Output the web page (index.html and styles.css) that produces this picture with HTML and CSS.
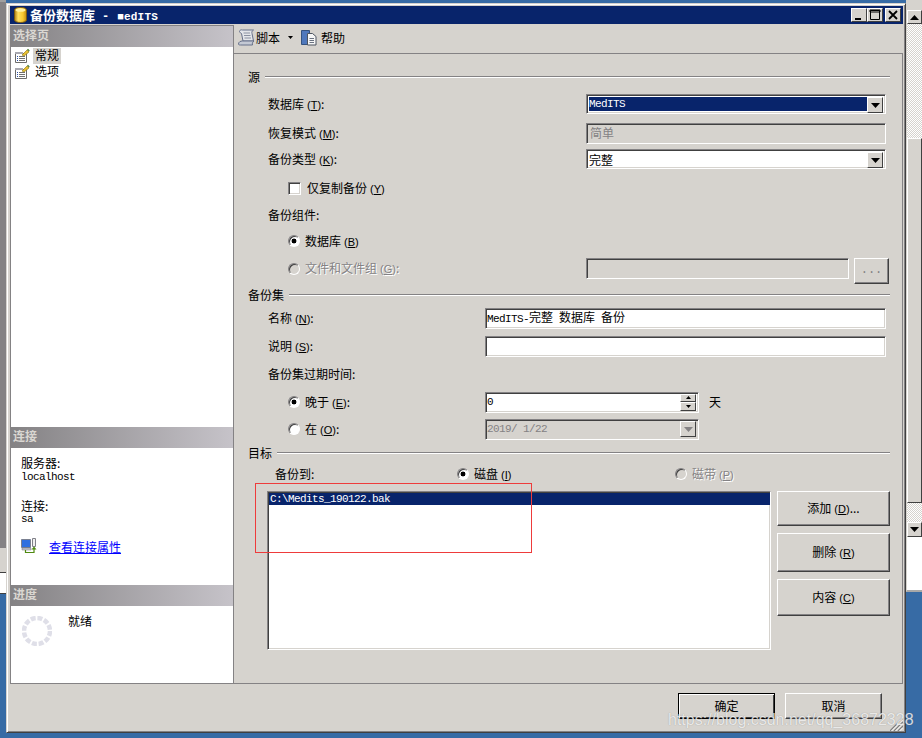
FILE: index.html
```html
<!DOCTYPE html>
<html lang="zh-CN">
<head>
<meta charset="utf-8">
<title>备份数据库 - MedITS</title>
<link rel="stylesheet" href="styles.css">
</head>
<body>
<svg class="defs" width="0" height="0" aria-hidden="true">
  <symbol id="page-icon" viewBox="0 0 16 16">
    <path d="M1.500 5.500h11v9h-11z" fill="#fff" stroke="#6b6b6b"/>
    <path d="M1 4h8v2H1z" fill="#a8a8b0"/>
    <path d="M3 8h1v1H3zM3 10h1v1H3zM3 12h1v1H3z" fill="#2a4fa8"/>
    <path d="M5 8h6v1H5zM5 10h6v1H5zM5 12h6v1H5z" fill="#707070"/>
    <path d="M8 7l5-5 2 2-5 4z" fill="#e8c030" stroke="#8a7010" stroke-width=".6"/>
    <path d="M13 1.500l2 2 .7-1-1.700-1.700z" fill="#4a7a30"/>
  </symbol>
  <symbol id="arrow-down" viewBox="0 0 9 5">
    <path d="M0 0h9L4.500 5z"/>
  </symbol>
</svg>

<div class="rear rear-left">
  <div class="rear-dark"></div>
  <div class="rear-bar"></div>
  <div class="rear-white"></div>
</div>

<div class="rear rear-right">
  <div class="scroll-btn scroll-up"><svg class="tri" viewBox="0 0 9 5"><path d="M0 5h9L4.500 0z"/></svg></div>
  <div class="scroll-track scroll-track-a"></div>
  <div class="scroll-thumb"></div>
  <div class="scroll-track scroll-track-b"></div>
  <div class="scroll-btn scroll-down"><svg class="tri"><use href="#arrow-down"/></svg></div>
  <div class="rear-white rear-white-r"></div>
</div>

<main class="window">
  <header class="titlebar">
    <svg class="db-icon" viewBox="0 0 13 16">
      <defs>
        <linearGradient id="db-fill" x1="0" x2="1" y1="0" y2="0">
          <stop offset="0" stop-color="#a87810"/>
          <stop offset=".3" stop-color="#ffe060"/>
          <stop offset=".7" stop-color="#f8c830"/>
          <stop offset="1" stop-color="#c08a10"/>
        </linearGradient>
      </defs>
      <path d="M.5 3c0-3.300 12-3.300 12 0v10c0 3.300-12 3.300-12 0z" fill="url(#db-fill)" stroke="#7a5a10"/>
      <ellipse cx="6.500" cy="3" rx="5" ry="1.800" fill="#fff0a0"/>
    </svg>
    <span class="title-text">备份数据库<span class="title-dash">-</span><span class="title-name">■edITS</span></span>
    <div class="caption-btns">
      <button class="cap-btn cap-min" type="button"><svg viewBox="0 0 14 12"><path d="M3 9h6v2H3z"/></svg></button>
      <button class="cap-btn cap-max" type="button"><svg viewBox="0 0 14 12"><path d="M2.500 1.500h9v9h-9z M2 1h10v2H2z" fill="none" stroke="#000"/></svg></button>
      <button class="cap-btn cap-close" type="button"><svg viewBox="0 0 14 12"><path d="M3 2l8 8M11 2l-8 8" stroke="#000" stroke-width="1.800"/></svg></button>
    </div>
  </header>

  <div class="content">
    <aside class="sidebar">
      <section class="side-section side-pages">
        <h2 class="side-head">选择页</h2>
        <ul class="tree">
          <li class="tree-item"><svg class="icon16"><use href="#page-icon"/></svg><span class="tree-label tree-current">常规</span></li>
          <li class="tree-item"><svg class="icon16"><use href="#page-icon"/></svg><span class="tree-label">选项</span></li>
        </ul>
      </section>
      <section class="side-section side-conn">
        <h2 class="side-head">连接</h2>
        <div class="conn-body">
          <div class="conn-label">服务器:</div>
          <div class="conn-value">localhost</div>
          <div class="conn-label conn-next">连接:</div>
          <div class="conn-value">sa</div>
          <div class="conn-link">
            <svg class="icon16" viewBox="0 0 16 16">
              <path d="M.5 1.500h9v8h-9z" fill="#2f6fe0" stroke="#7a8090"/>
              <path d="M1 10h9v2H1z" fill="#c8c8d0" stroke="#70707a" stroke-width=".5"/>
              <path d="M11.500 .5h3v8h-3z" fill="#f0f0f0" stroke="#808088"/>
              <path d="M4.500 12v2.500h8.500V11" fill="none" stroke="#4f8a10" stroke-width="1.200"/>
              <path d="M10.500 11.500L13 8.500l2.500 3z" fill="#4f8a10"/>
            </svg>
            <a class="link" href="#">查看连接属性</a>
          </div>
        </div>
      </section>
      <section class="side-section side-progress">
        <h2 class="side-head">进度</h2>
        <div class="progress-body">
          <svg class="spinner" viewBox="0 0 30 30">
            <circle cx="15" cy="15" r="13" fill="none" stroke="#dfdfe8" stroke-width="4.500" stroke-dasharray="5 1.810"/>
          </svg>
          <span class="progress-text">就绪</span>
        </div>
      </section>
    </aside>

    <div class="pane">
      <div class="toolbar">
        <svg class="icon-script" viewBox="0 0 17 17">
          <path d="M1.500 2.500c0-1.500 2-2 3-1.500h11c-1.500 1-2 2-1.500 3.500l1.500 7.500H5L3.500 4.500C3 3.500 1.500 4 1.500 2.500z" fill="#e4e6ea" stroke="#66708a"/>
          <path d="M.5 15c0-2 2-3 4-3h11.500c-1.500 1-2 2.500-1.500 4H2.500C1.500 16 .5 16 .5 15z" fill="#c4c9d4" stroke="#66708a"/>
          <path d="M5.500 4h6.500M6 6.500h6.500M6.500 9h6.500" stroke="#8a90a0"/>
        </svg>
        <span class="tool-label">脚本</span>
        <svg class="tool-arrow"><use href="#arrow-down"/></svg>
        <svg class="icon-help" viewBox="0 0 16 17">
          <path d="M.5 1.500h8v14h-8z" fill="#4f78bc" stroke="#34527f"/>
          <path d="M6.500 4.500h5l3.500 3v8.500H6.500z" fill="#f6f6f6" stroke="#4c5460"/>
          <path d="M8.500 9.500h4.500M8.500 11.500h4.500M8.500 13.500h4.500" stroke="#6a7280"/>
        </svg>
        <span class="tool-label">帮助</span>
      </div>

      <form class="form">
        <div class="row group-row">
          <span class="group-title">源</span><span class="group-line"></span>
        </div>

        <div class="row indent">
          <label class="label label-wide">数据库<span class="key">(<u>T</u>)</span>:</label>
          <div class="combo combo-selected">
            <span class="combo-value mono">MedITS</span>
            <span class="combo-btn"><svg class="tri"><use href="#arrow-down"/></svg></span>
          </div>
        </div>

        <div class="row indent">
          <label class="label label-wide">恢复模式<span class="key">(<u>M</u>)</span>:</label>
          <div class="input input-wide input-off"><span class="off-text">简单</span></div>
        </div>

        <div class="row indent">
          <label class="label label-wide">备份类型<span class="key">(<u>K</u>)</span>:</label>
          <div class="combo combo-plain">
            <span class="combo-value">完整</span>
            <span class="combo-btn"><svg class="tri"><use href="#arrow-down"/></svg></span>
          </div>
        </div>

        <div class="row indent-sub">
          <span class="checkbox"></span>
          <label class="label check-label">仅复制备份<span class="key">(<u>Y</u>)</span></label>
        </div>

        <div class="row indent">
          <label class="label">备份组件:</label>
        </div>

        <div class="row indent-sub">
          <span class="radio radio-on"></span>
          <label class="label radio-label">数据库<span class="key">(<u>B</u>)</span></label>
        </div>

        <div class="row indent-sub row-top">
          <span class="radio radio-off"></span>
          <label class="label radio-label label-off label-file">文件和文件组<span class="key">(<u>G</u>)</span>:</label>
          <div class="input input-file input-off"></div>
          <button class="btn btn-browse" type="button" disabled>...</button>
        </div>

        <div class="row group-row">
          <span class="group-title">备份集</span><span class="group-line"></span>
        </div>

        <div class="row indent">
          <label class="label label-mid">名称<span class="key">(<u>N</u>)</span>:</label>
          <div class="input input-long"><span class="mono">MedITS-<span class="cjk">完整</span> <span class="cjk">数据库</span> <span class="cjk">备份</span></span></div>
        </div>

        <div class="row indent">
          <label class="label label-mid">说明<span class="key">(<u>S</u>)</span>:</label>
          <div class="input input-long"></div>
        </div>

        <div class="row indent">
          <label class="label">备份集过期时间:</label>
        </div>

        <div class="row indent-sub">
          <span class="radio radio-on"></span>
          <label class="label radio-label label-date">晚于<span class="key">(<u>E</u>)</span>:</label>
          <div class="input input-date">
            <span class="mono">0</span>
            <span class="spin">
              <span class="spin-btn"><svg class="tri-sm" viewBox="0 0 5 3"><path d="M0 3h5L2.500 0z"/></svg></span>
              <span class="spin-btn"><svg class="tri-sm" viewBox="0 0 5 3"><path d="M0 0h5L2.500 3z"/></svg></span>
            </span>
          </div>
          <span class="unit">天</span>
        </div>

        <div class="row indent-sub">
          <span class="radio radio-plain"></span>
          <label class="label radio-label label-date">在<span class="key">(<u>O</u>)</span>:</label>
          <div class="input input-date input-off">
            <span class="mono off-mono">2019/ 1/22</span>
            <span class="combo-btn combo-btn-off"><svg class="tri tri-off"><use href="#arrow-down"/></svg></span>
          </div>
        </div>

        <div class="row group-row">
          <span class="group-title">目标</span><span class="group-line"></span>
        </div>

        <div class="row row-target">
          <label class="label label-to">备份到:</label>
          <span class="radio radio-on"></span>
          <label class="label radio-label label-disk">磁盘<span class="key">(<u>I</u>)</span></label>
          <span class="radio radio-off"></span>
          <label class="label radio-label label-off">磁带<span class="key">(<u>P</u>)</span></label>
        </div>

        <div class="dest">
          <div class="listbox">
            <div class="list-item mono">C:\Medits_190122.bak</div>
          </div>
          <div class="dest-btns">
            <button class="btn btn-add" type="button">添加<span class="key">(<u>D</u>)</span>...</button>
            <button class="btn btn-del" type="button">删除<span class="key">(<u>R</u>)</span></button>
            <button class="btn btn-props" type="button">内容<span class="key">(<u>C</u>)</span></button>
          </div>
        </div>
      </form>
    </div>
  </div>

  <footer class="footer">
    <button class="btn btn-dlg btn-default" type="button">确定</button>
    <button class="btn btn-dlg" type="button">取消</button>
    <svg class="grip" viewBox="0 0 13 13">
      <path d="M0 13L13 0M4 13L13 4M8 13l5-5" stroke="#808080" stroke-width="1.400"/>
      <path d="M1.500 13L13 1.500M5.500 13L13 5.500M9.500 13L13 9.500" stroke="#fff"/>
    </svg>
  </footer>
</main>

<!-- annotation drawn over the destination list -->
<div class="red-box"></div>
<div class="watermark">https://blog.csdn.net/qq_36872328</div>
</body>
</html>
```

FILE: styles.css
```css
* { box-sizing: border-box; }

html, body {
  margin: 0;
  height: 100%;
}

body {
  position: relative;
  width: 922px;
  height: 738px;
  overflow: hidden;
  background: #376ba5;
  font: 12px/15px "Noto Sans CJK SC", "Liberation Sans", sans-serif;
  color: #000;
}

.defs { position: absolute; }

/* windows behind the dialog */
.rear {
  position: absolute;
  top: 0;
  display: flex;
  flex-direction: column;
}

.rear-left {
  left: 0;
  width: 6px;
  height: 594px;
  border-bottom: 1px solid #404040;
}

.rear-dark { height: 548px; background: #848284; border-top: 2px solid #a0a0a0; }
.rear-bar { height: 25px; background: #d6d3ce; border-bottom: 1px solid #404040; }
.rear-white { flex: 1; background: #fff; }

.rear-right {
  left: 906px;
  width: 16px;
  height: 592px;
  padding-top: 10px;
  background: #d6d3ce;
  border-bottom: 2px solid #a8a8a8;
  border-left: 1px solid #d6d3ce;
}

.scroll-btn {
  display: flex;
  align-items: center;
  justify-content: center;
  height: 14px;
  background: #d6d3ce;
  border: 1px solid;
  border-color: #fff #404040 #404040 #fff;
}

.scroll-track {
  background: repeating-conic-gradient(#fff 0 25%, #d6d3ce 0 50%) 0 0 / 2px 2px;
}
.scroll-track-a { height: 114px; }
.scroll-track-b { height: 19px; }

.scroll-thumb {
  height: 365px;
  background: #d6d3ce;
  border: 1px solid;
  border-color: #fff #404040 #404040 #fff;
}

.scroll-down { height: 15px; }

.tri { width: 9px; height: 5px; display: block; fill: #000; }
.tri-off { fill: #848284; }
.tri-sm { width: 5px; height: 3px; display: block; }

/* dialog frame */
.window {
  position: absolute;
  left: 6px;
  top: 3px;
  width: 900px;
  height: 730px;
  padding: 2px 2px 0 3px;
  background: #d6d3ce;
  border: 1px solid;
  border-color: #d6d3ce #404040 #404040 #d6d3ce;
  box-shadow: inset 1px 1px 0 #fff, inset -1px -1px 0 #848284;
  display: flex;
  flex-direction: column;
}

.titlebar {
  height: 18px;
  flex: none;
  margin-bottom: 1px;
  background: #08246b;
  color: #fff;
  display: flex;
  align-items: center;
  padding: 0 2px 0 4px;
}

.db-icon { width: 13px; height: 16px; flex: none; }

.title-text {
  margin-left: 3px;
  font-size: 13px;
  font-weight: 700;
  white-space: pre;
}

.title-dash {
  margin-left: 7px;
  font: 700 12px "Liberation Mono", monospace;
}

.title-name {
  margin-left: 8px;
  font: 700 11px "Liberation Mono", monospace;
  letter-spacing: .2px;
}

.caption-btns { margin-left: auto; display: flex; }

.cap-btn {
  width: 16px;
  height: 14px;
  padding: 0;
  display: block;
  background: #d6d3ce;
  border: 1px solid;
  border-color: #fff #404040 #404040 #fff;
}
.cap-btn svg { display: block; width: 14px; height: 12px; }
.cap-max { margin-right: 2px; }

/* main split */
.content {
  height: 659px;
  flex: none;
  display: flex;
}

.sidebar {
  width: 224px;
  flex: none;
  display: flex;
  flex-direction: column;
  background: #fff;
  border: 1px solid #848284;
}

.side-section { display: flex; flex-direction: column; }
.side-pages { flex: 1; }
.side-conn { height: 158px; }
.side-progress { height: 98px; }

.side-head {
  height: 21px;
  margin: 0;
  padding: 1px 0 0 2px;
  flex: none;
  font-size: 12px;
  line-height: 15px;
  font-weight: 700;
  color: #dad7d2;
  background: linear-gradient(90deg, #848284, #c6c3c9);
}

.tree { list-style: none; margin: 1px 0 0; padding: 0 0 0 3px; }

.tree-item {
  height: 16px;
  display: flex;
  align-items: center;
}

.icon16 { width: 16px; height: 16px; flex: none; display: block; }

.tree-label { margin-left: 3px; padding: 0 2px 2px; line-height: 14px; }
.tree-current { background: #d6d3ce; }

.conn-body { padding: 7px 0 0 10px; }

.conn-label { line-height: 15px; }
.conn-next { margin-top: 15px; }

.conn-value {
  margin-top: 1px;
  font: 11px/12px "Liberation Mono", monospace;
  letter-spacing: -.6px;
}

.conn-next + .conn-value { margin-top: 0; }

.conn-link {
  margin-top: 13px;
  display: flex;
  align-items: center;
  gap: 12px;
}

.link { color: #0000ff; text-decoration: underline; }

.progress-body {
  padding: 7px 0 0 11px;
  display: flex;
  gap: 16px;
}

.spinner { width: 30px; height: 30px; margin-top: 3px; flex: none; }

/* right pane */
.pane {
  flex: 1;
  min-width: 0;
  display: flex;
  flex-direction: column;
}

.toolbar {
  height: 29px;
  flex: none;
  padding: 0 0 3px 4px;
  display: flex;
  align-items: center;
  border-bottom: 1px solid #848284;
}

.icon-script { width: 17px; height: 17px; flex: none; }
.icon-help { width: 16px; height: 17px; flex: none; margin-left: 8px; }
.tool-label { margin-left: 1px; }
.icon-help + .tool-label { margin-left: 4px; }
.tool-arrow { width: 5px; height: 3px; margin-left: 8px; flex: none; }

.form {
  flex: 1;
  padding: 12px 12px 0 14px;
  border-right: 1px solid #848284;
  border-bottom: 1px solid #848284;
  display: grid;
  grid-template-rows: 27px 29px 26px 29px 27px 26px 28px 26px 23px 28px 28px 28px 27px 24px 21px 28px 1fr;
  grid-template-columns: minmax(0, 1fr);
}

.row {
  height: 22px;
  display: flex;
  align-items: center;
}

.row-top { align-items: flex-start; }
.row-top > .radio { margin-top: 5px; }
.row-top > .label { margin-top: 2px; }

.indent { padding-left: 20px; }
.indent-sub { padding-left: 40px; }

.group-title { flex: none; padding-bottom: 2px; }
.group-line {
  flex: 1;
  height: 2px;
  margin-left: 5px;
  border-top: 1px solid #848284;
  border-bottom: 1px solid #fff;
}

.label { flex: none; white-space: nowrap; padding-bottom: 2px; }
.label-wide { width: 318px; }
.label-mid { width: 217px; }

.key {
  font: 11px "Liberation Sans", sans-serif;
  margin-left: 3px;
}

.check-label { margin-left: 6px; }
.radio-label { margin-left: 5px; }
.label-date { width: 180px; }
.label-file { width: 281px; }
.label-off { color: #848284; text-shadow: 1px 1px 0 #fff; }
.label-to { width: 182px; margin-left: 27px; }
.label-disk { width: 201px; }

.unit { padding-bottom: 2px; margin-left: 10px; }

.mono {
  font: 11px/16px "Liberation Mono", monospace;
  letter-spacing: -.6px;
}

.cjk {
  font: 12px/16px "Noto Sans CJK SC", sans-serif;
  letter-spacing: 0;
}

/* sunken controls */
.input, .combo, .listbox {
  border: 1px solid;
  border-color: #848284 #fff #fff #848284;
  box-shadow: inset 1px 1px 0 #404040, inset -1px -1px 0 #d6d3ce;
}

.input {
  flex: none;
  height: 21px;
  padding: 0 0 0 3px;
  background: #fff;
  display: flex;
  align-items: center;
}

.input-off { background: #d6d3ce; box-shadow: inset 1px 1px 0 #404040; }
.input-wide { width: 300px; }
.input-file { width: 263px; }
.input-long { width: 401px; padding-left: 1px; }
.input-date { width: 214px; padding: 0 2px 0 1px; justify-content: space-between; }

.off-text { color: #848284; padding-bottom: 1px; }
.off-mono { color: #848284; }

.combo {
  width: 300px;
  height: 20px;
  padding: 2px;
  display: flex;
  align-items: stretch;
  background: #fff;
}

.combo-selected .combo-value { background: #08246b; color: #fff; }

.combo-value {
  flex: 1;
  padding-left: 0;
  line-height: 15px;
}

.combo-btn {
  width: 16px;
  height: 16px;
  flex: none;
  display: flex;
  align-items: center;
  justify-content: center;
  background: #d6d3ce;
  border: 1px solid;
  border-color: #fff #404040 #404040 #fff;
}

.spin {
  width: 16px;
  height: 17px;
  display: flex;
  flex-direction: column;
}

.spin-btn {
  flex: 1;
  display: flex;
  align-items: center;
  justify-content: center;
  background: #d6d3ce;
  border: 1px solid;
  border-color: #fff #404040 #404040 #fff;
}

.checkbox {
  width: 13px;
  height: 13px;
  flex: none;
  background: #fff;
  border: 1px solid;
  border-color: #848284 #fff #fff #848284;
  box-shadow: inset 1px 1px 0 #404040, inset -1px -1px 0 #d6d3ce;
}

.radio {
  width: 12px;
  height: 12px;
  flex: none;
  border-radius: 50%;
  background: #fff;
  border: 1px solid;
  border-color: #848284 #fff #fff #848284;
  box-shadow: inset 1px 1px 0 #404040, 0 0 0 .5px #d6d3ce;
}

.radio-on { background: radial-gradient(circle at 50% 50%, #000 0 2.200px, #fff 2.700px); }
.radio-off { background: #d6d3ce; }

/* destination list and its buttons */
.dest {
  display: flex;
  gap: 6px;
  padding-left: 19px;
  align-items: flex-start;
}

.listbox {
  width: 504px;
  height: 159px;
  padding: 1px 0 0 1px;
  background: #fff;
}

.list-item {
  height: 12px;
  padding-left: 1px;
  line-height: 12px;
  background: #08246b;
  color: #fff;
}

.dest-btns {
  width: 113px;
  flex: none;
  display: flex;
  flex-direction: column;
  gap: 7px;
}

.btn {
  padding: 0 0 2px;
  font: 12px/15px "Noto Sans CJK SC", "Liberation Sans", sans-serif;
  color: #000;
  background: #d6d3ce;
  border: 1px solid;
  border-color: #fff #404040 #404040 #fff;
  box-shadow: inset -1px -1px 0 #848284;
}

.btn-add { height: 35px; }
.btn-del { height: 39px; }
.btn-props { height: 37px; padding-bottom: 3px; }

.btn-browse {
  width: 35px;
  height: 26px;
  margin-left: 5px;
  flex: none;
  color: #848284;
  font-family: "Liberation Mono", monospace;
}

.btn-dlg { width: 97px; height: 26px; }
.btn-default { border-color: #000; box-shadow: inset 1px 1px 0 #fff, inset -1px -1px 0 #404040; }

.footer {
  flex: 1;
  position: relative;
  padding: 9px 21px 0 0;
  display: flex;
  justify-content: flex-end;
  align-items: flex-start;
  gap: 10px;
}

.grip {
  position: absolute;
  right: 0;
  bottom: 1px;
  width: 13px;
  height: 13px;
}

/* annotation and image credit */
.red-box {
  position: absolute;
  left: 255px;
  top: 483px;
  width: 277px;
  height: 70px;
  border: 1px solid #ee3b3b;
}

.watermark {
  position: absolute;
  left: 668px;
  top: 713px;
  font: 16px/14px "Liberation Sans", sans-serif;
  color: rgba(255, 255, 255, .78);
  text-shadow: 0 0 1px rgba(90, 90, 90, .55);
  white-space: nowrap;
}
```
